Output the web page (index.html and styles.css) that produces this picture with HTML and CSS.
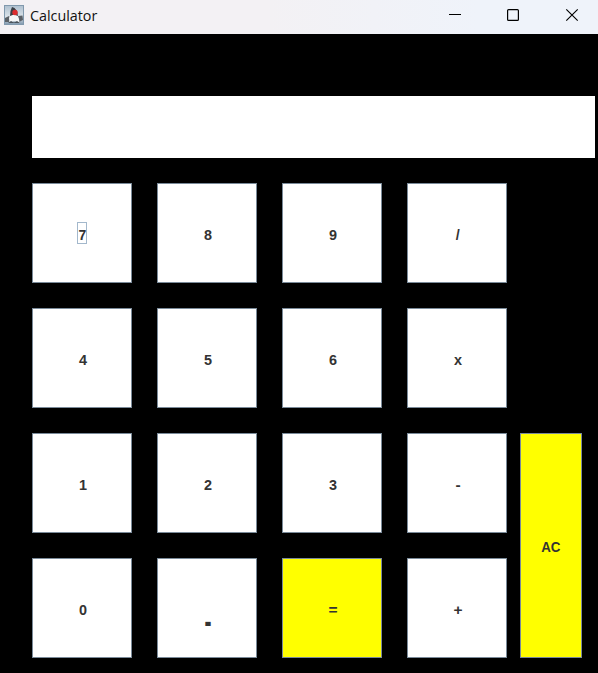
FILE: index.html
```html
<!DOCTYPE html>
<html lang="en">
<head>
<meta charset="utf-8">
<title>Calculator</title>
<link rel="stylesheet" href="styles.css">
</head>
<body>
<div class="window">
  <header class="titlebar">
    <svg class="app-icon" width="20" height="20" viewBox="0 0 20 20">
      <defs><linearGradient id="tile" x1="0" y1="0" x2="0" y2="1"><stop offset="0" stop-color="#aec0cf"/><stop offset=".6" stop-color="#dce4ea"/><stop offset="1" stop-color="#7f97ad"/></linearGradient></defs>
      <rect x=".5" y=".5" width="19" height="19" fill="url(#tile)" stroke="#8199ad"/>
      <path d="M1 13L5 11L7 13L5 17H1ZM14 11L18.500 10.500L19 15L15 17Z" fill="#5b6167"/>
      <path d="M7 8L13 9L15 14L15.500 18L10 16L5.500 18L5 13Z" fill="#f5f6f7"/>
      <path d="M8 2L10.500 3L13 6L14 11L10 9.500L6 11L6.500 6Z" fill="#3a3f45"/>
      <circle cx="11" cy="7.500" r="2.700" fill="#dc2c2e"/>
      <path d="M4 18L7 16L10 17.500L13 16L16 18Z" fill="#48525b"/>
    </svg>
    <span class="title">Calculator</span>
    <div class="controls">
      <svg width="58" height="34" viewBox="0 0 58 34"><path d="M19 14.500H31" stroke="#000"/></svg>
      <svg width="59" height="34" viewBox="0 0 59 34"><rect x="19.600" y="9.600" width="10.800" height="10.800" rx="1" fill="none" stroke="#000" stroke-width="1.200"/></svg>
      <svg width="51" height="34" viewBox="0 0 51 34"><path d="M19.300 9.300L30.700 20.700M30.700 9.300L19.300 20.700" stroke="#000" stroke-width="1.150"/></svg>
    </div>
  </header>
  <main class="calculator">
    <div class="display"></div>
    <div class="keys">
      <button class="key"><span class="focus"><span class="label">7</span></span></button>
      <button class="key"><span class="label">8</span></button>
      <button class="key"><span class="label">9</span></button>
      <button class="key"><span class="label">/</span></button>
      <button class="key"><span class="label">4</span></button>
      <button class="key"><span class="label">5</span></button>
      <button class="key"><span class="label">6</span></button>
      <button class="key"><span class="label">x</span></button>
      <button class="key"><span class="label">1</span></button>
      <button class="key"><span class="label">2</span></button>
      <button class="key"><span class="label">3</span></button>
      <button class="key">-</button>
      <button class="key clear"><span class="label">AC</span></button>
      <button class="key"><span class="label">0</span></button>
      <button class="key dot"><span class="label">.</span></button>
      <button class="key yellow">=</button>
      <button class="key">+</button>
    </div>
  </main>
</div>
</body>
</html>
```
FILE: styles.css
```css
* { box-sizing: border-box; }
body { margin: 0; background: #000; }
.window { width: 598px; height: 673px; overflow: hidden; }
.titlebar {
  display: flex;
  align-items: flex-start;
  height: 34px;
  padding-left: 4px;
  background: linear-gradient(90deg, #f3f1f4, #f3f1f4 45%, #eff3fa 80%);
}
.app-icon { margin-top: 5px; }
.title {
  margin-left: 6px;
  font: 14.3px/32px "Open Sans", sans-serif;
  color: #111;
}
.controls { display: flex; margin-left: auto; }
.calculator { height: 639px; padding: 62px 3px 0 32px; background: #000; }
.display { height: 62px; background: #fff; }
.keys {
  display: grid;
  grid-template-columns: repeat(3, 100px 25px) 100px 13px 62px;
  grid-template-rows: repeat(4, 100px);
  row-gap: 25px;
  margin-top: 25px;
}
.key {
  display: flex;
  align-items: center;
  justify-content: center;
  margin: 0;
  padding: 3px 0 0 2px;
  border: 1px solid #7a8a99;
  border-radius: 0;
  background: #fff;
  color: #333;
  font: bold 15.5px/20px "Liberation Sans", sans-serif;
}
.label { display: block; transform: translateX(-.4px) scaleX(.93); }
.key:nth-child(-n+12):nth-child(4n+1), .key:nth-child(14) { grid-column: 1; }
.key:nth-child(-n+12):nth-child(4n+2), .key:nth-child(15) { grid-column: 3; }
.key:nth-child(-n+12):nth-child(4n+3), .key:nth-child(16) { grid-column: 5; }
.key:nth-child(-n+12):nth-child(4n+4), .key:nth-child(17) { grid-column: 7; }
.key.clear { grid-column: 9; grid-row: 3 / span 2; padding-left: 0; }
.clear .label { transform: translateX(-.4px) scaleX(.86); }
.yellow, .clear { background: #ff0; }
.key.dot { padding-top: 17px; font-size: 28px; line-height: 32px; }
.dot .label { transform: scaleX(1.35); }
.focus {
  width: 10px;
  height: 22px;
  margin: -3px 0 0 -2px;
  border: 1px solid #a3b8cc;
  line-height: 24px;
}
.focus .label { transform: scaleX(.9); }
```
